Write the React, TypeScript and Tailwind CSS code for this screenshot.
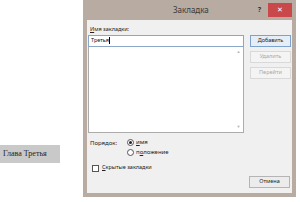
import React from 'react'

const font = { fontFamily: '"Noto Sans", "Liberation Sans", sans-serif' }

function Btn({ label, disabled, primary }: { label: string; disabled?: boolean; primary?: boolean }) {
  return (
    <div
      className={
        'h-[12px] w-[41px] flex items-center justify-center text-[5.5px] leading-none border ' +
        (disabled
          ? 'border-[#d9d9d9] bg-[#f4f4f4] text-[#a8a8a8]'
          : primary
            ? 'border-[#7da2ce] bg-[#e5eef8] text-[#222]'
            : 'border-[#b5b5b5] bg-[#ececec] text-[#222]')
      }
    >
      {label}
    </div>
  )
}

export default function App() {
  return (
    <div className="w-[300px] h-[202px] bg-white flex overflow-hidden" style={font}>
      <div className="w-[83px] shrink-0 pt-[145px]">
        <div
          className="w-[60px] h-[18px] bg-[#c9c9c9] flex items-center pl-[3px] text-[8px] text-[#222] whitespace-nowrap"
          style={{ fontFamily: '"Liberation Serif", serif' }}
        >
          Глава Третья
        </div>
      </div>

      <div className="w-[213px] h-[197px] bg-[#b8aba1] flex flex-col px-[4px] pb-[4px]">
        <div className="h-[20px] shrink-0 flex items-center">
          <div className="flex-1 text-center text-[8px] text-[#3a3a3a] pl-[37px]">Закладка</div>
          <div className="text-[7px] text-[#333] font-bold mr-[7px]">?</div>
          <div className="w-[24px] h-[14px] bg-[#c9484a] flex items-center justify-center text-white text-[7px] self-start mt-[3px]">
            ✕
          </div>
        </div>

        <div className="flex-1 bg-[#f0f0f0] flex flex-col px-[1px] pt-[7px] pb-[5px]">
          <div className="flex gap-[6px]">
            <div className="w-[156px] flex flex-col">
              <div className="text-[5.5px] text-[#222] leading-none pl-[2px] mb-[2px]">
                <span className="underline">И</span>мя закладки:
              </div>
              <div className="h-[12px] bg-white border border-[#8aa6c9] flex items-center pl-[2px] text-[5.5px] text-[#111]">
                Третья<span className="w-[0.5px] h-[7px] bg-black ml-[0.5px]" />
              </div>
              <div className="h-[86px] bg-white border border-[#acacac] border-t-0 flex justify-end">
                <div className="w-[9px] flex flex-col justify-between items-center py-[2px] text-[#b0b0b0] text-[4px]">
                  <span>▲</span>
                  <span>▼</span>
                </div>
              </div>
            </div>
            <div className="flex flex-col gap-[4px] pt-[8px]">
              <Btn label="Добавить" primary />
              <Btn label="Удалить" disabled />
              <Btn label="Перейти" disabled />
            </div>
          </div>

          <div className="flex mt-[6px] pl-[2px] text-[6px] text-[#222] leading-none">
            <div className="w-[37px] pt-[1px]">Порядок:</div>
            <div className="flex flex-col gap-[3px]">
              <div className="flex items-center gap-[2px]">
                <span className="w-[7px] h-[7px] rounded-full border border-[#555] bg-white flex items-center justify-center">
                  <span className="w-[3px] h-[3px] rounded-full bg-[#222]" />
                </span>
                <span><span className="underline">и</span>мя</span>
              </div>
              <div className="flex items-center gap-[2px]">
                <span className="w-[7px] h-[7px] rounded-full border border-[#555] bg-white" />
                <span>п<span className="underline">о</span>ложение</span>
              </div>
            </div>
          </div>

          <div className="flex items-center gap-[3px] mt-[9px] pl-[4px] text-[5.5px] text-[#222] leading-none">
            <span className="w-[7px] h-[7px] border border-[#555] bg-white" />
            <span><span className="underline">С</span>крытые закладки</span>
          </div>

          <div className="flex-1" />
          <div className="flex justify-end pr-[1px]">
            <Btn label="Отмена" />
          </div>
        </div>
      </div>
    </div>
  )
}
